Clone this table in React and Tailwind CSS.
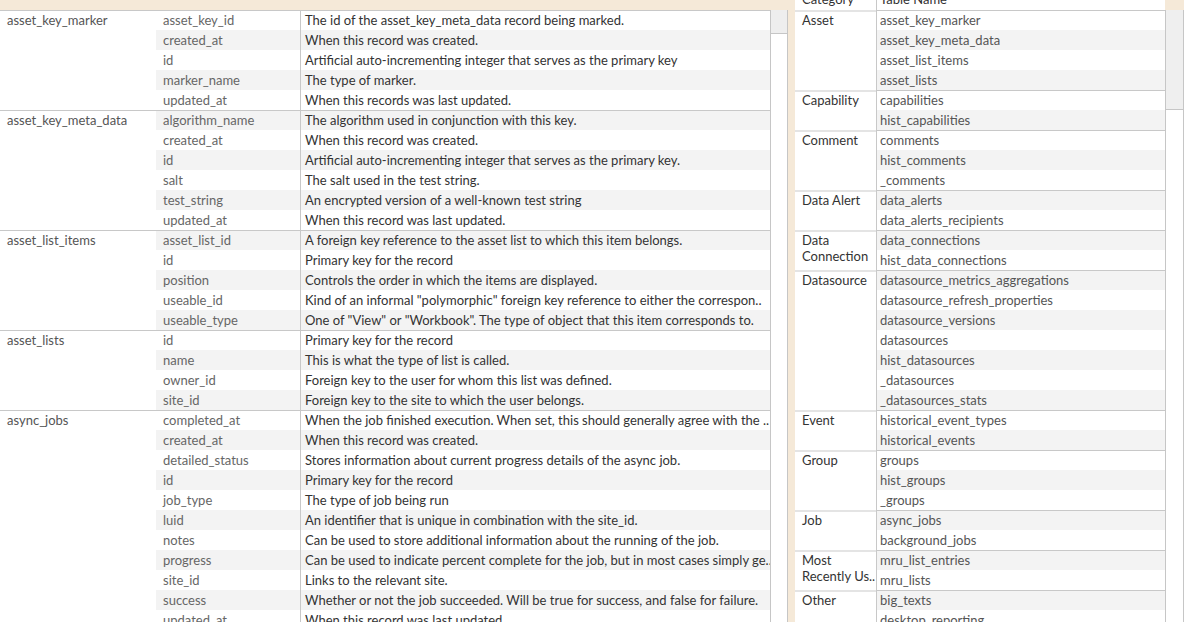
import React from "react";

const columns = [
  {
    table: "asset_key_marker",
    rows: [
      ["asset_key_id", "The id of the asset_key_meta_data record being marked."],
      ["created_at", "When this record was created."],
      ["id", "Artificial auto-incrementing integer that serves as the primary key"],
      ["marker_name", "The type of marker."],
      ["updated_at", "When this records was last updated."],
    ],
  },
  {
    table: "asset_key_meta_data",
    rows: [
      ["algorithm_name", "The algorithm used in conjunction with this key."],
      ["created_at", "When this record was created."],
      ["id", "Artificial auto-incrementing integer that serves as the primary key."],
      ["salt", "The salt used in the test string."],
      ["test_string", "An encrypted version of a well-known test string"],
      ["updated_at", "When this record was last updated."],
    ],
  },
  {
    table: "asset_list_items",
    rows: [
      ["asset_list_id", "A foreign key reference to the asset list to which this item belongs."],
      ["id", "Primary key for the record"],
      ["position", "Controls the order in which the items are displayed."],
      ["useable_id", "Kind of an informal \"polymorphic\" foreign key reference to either the correspon.."],
      ["useable_type", "One of \"View\" or \"Workbook\". The type of object that this item corresponds to."],
    ],
  },
  {
    table: "asset_lists",
    rows: [
      ["id", "Primary key for the record"],
      ["name", "This is what the type of list is called."],
      ["owner_id", "Foreign key to the user for whom this list was defined."],
      ["site_id", "Foreign key to the site to which the user belongs."],
    ],
  },
  {
    table: "async_jobs",
    rows: [
      ["completed_at", "When the job finished execution. When set, this should generally agree with the .."],
      ["created_at", "When this record was created."],
      ["detailed_status", "Stores information about current progress details of the async job."],
      ["id", "Primary key for the record"],
      ["job_type", "The type of job being run"],
      ["luid", "An identifier that is unique in combination with the site_id."],
      ["notes", "Can be used to store additional information about the running of the job."],
      ["progress", "Can be used to indicate percent complete for the job, but in most cases simply ge.."],
      ["site_id", "Links to the relevant site."],
      ["success", "Whether or not the job succeeded. Will be true for success, and false for failure."],
      ["updated_at", "When this record was last updated."],
    ],
  },
];

const categories = [
  { name: ["Asset"], tables: ["asset_key_marker", "asset_key_meta_data", "asset_list_items", "asset_lists"] },
  { name: ["Capability"], tables: ["capabilities", "hist_capabilities"] },
  { name: ["Comment"], tables: ["comments", "hist_comments", "_comments"] },
  { name: ["Data Alert"], tables: ["data_alerts", "data_alerts_recipients"] },
  { name: ["Data", "Connection"], tables: ["data_connections", "hist_data_connections"] },
  {
    name: ["Datasource"],
    tables: [
      "datasource_metrics_aggregations",
      "datasource_refresh_properties",
      "datasource_versions",
      "datasources",
      "hist_datasources",
      "_datasources",
      "_datasources_stats",
    ],
  },
  { name: ["Event"], tables: ["historical_event_types", "historical_events"] },
  { name: ["Group"], tables: ["groups", "hist_groups", "_groups"] },
  { name: ["Job"], tables: ["async_jobs", "background_jobs"] },
  { name: ["Most", "Recently Us.."], tables: ["mru_list_entries", "mru_lists"] },
  { name: ["Other"], tables: ["big_texts", "desktop_reporting"] },
];

function ColumnsTable() {
  let n = 0;
  return (
    <div className="w-[770px] bg-white overflow-hidden">
      {columns.map((g) => (
        <div key={g.table} className="flex">
          <div className="w-[156px] shrink-0 pl-[7px] leading-[20px] text-[#555] shadow-[inset_0_1px_0_#c8c8c8] whitespace-nowrap">
            {g.table}
          </div>
          <div className="flex-1">
            {g.rows.map((r, i) => {
              const band = n++ % 2 === 1 ? "bg-[#f3f3f3]" : "bg-white";
              const line = i === 0 ? "shadow-[inset_0_1px_0_#c8c8c8]" : "";
              return (
                <div key={i} className={`flex h-[20px] leading-[20px] ${band}`}>
                  <div className={`w-[144px] shrink-0 pl-[7px] text-[#666] whitespace-nowrap ${line}`}>{r[0]}</div>
                  <div className={`flex-1 border-l border-[#c8c8c8] pl-[4px] text-[#333] whitespace-nowrap overflow-hidden ${line}`}>
                    {r[1]}
                  </div>
                </div>
              );
            })}
          </div>
        </div>
      ))}
    </div>
  );
}

function CategoryTable() {
  let n = 0;
  return (
    <div className="w-[370px] bg-white overflow-hidden">
      <div className="flex h-[10px] overflow-hidden">
        <div className="w-[81px] shrink-0 pl-[7px] -mt-[11px] leading-[20px] text-[#333]">Category</div>
        <div className="flex-1 border-l border-[#c8c8c8] pl-[3px] -mt-[11px] leading-[20px] text-[#333]">Table Name</div>
      </div>
      {categories.map((c) => (
        <div key={c.name.join(" ")} className="flex">
          <div className="w-[81px] shrink-0 pl-[7px] pt-[2px] leading-[16px] text-[#333] shadow-[inset_0_2px_0_#e4e4e4] whitespace-nowrap">
            {c.name.map((l, i) => (
              <div key={i}>{l}</div>
            ))}
          </div>
          <div className="flex-1">
            {c.tables.map((t, i) => {
              const band = n++ % 2 === 1 ? "bg-[#f3f3f3]" : "bg-white";
              const line = i === 0 ? "shadow-[inset_0_1px_0_#c8c8c8]" : "";
              return (
                <div
                  key={t}
                  className={`h-[20px] leading-[20px] border-l border-[#c8c8c8] pl-[3px] text-[#555] whitespace-nowrap ${band} ${line}`}
                >
                  {t}
                </div>
              );
            })}
          </div>
        </div>
      ))}
    </div>
  );
}

export default function App() {
  return (
    <div className="w-[1184px] h-[622px] overflow-hidden bg-[#f5e9d8] flex font-[Lato,sans-serif] text-[13px]">
      <div className="flex pt-[10px]">
        <ColumnsTable />
        <div className="w-[18px] border-x border-[#c6c6c6] bg-white">
          <div className="h-[24px] bg-[#eeeeee] border-b border-[#c6c6c6]" />
        </div>
      </div>
      <div className="flex ml-[7px]">
        <CategoryTable />
        <div className="flex flex-col pt-[10px]">
          <div className="w-[19px] flex-1 border-x border-[#c6c6c6] bg-white">
            <div className="h-[100px] bg-[#efefef] border-b border-[#c6c6c6]" />
          </div>
        </div>
      </div>
    </div>
  );
}
